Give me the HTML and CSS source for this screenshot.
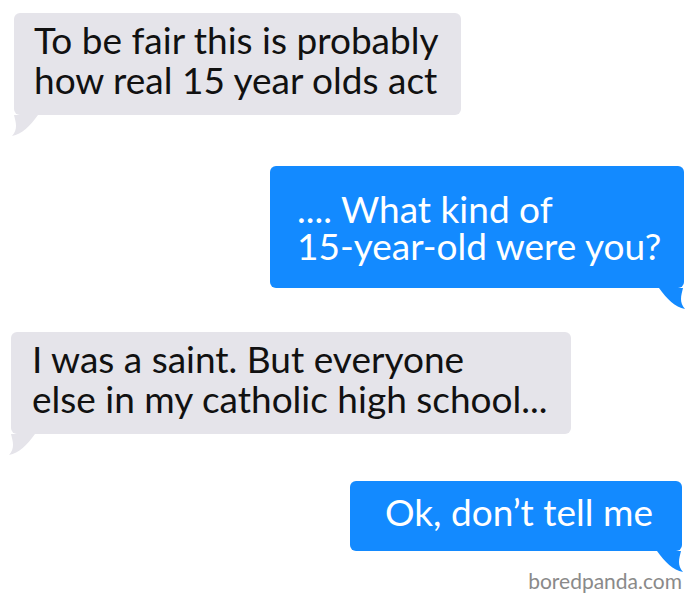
FILE: index.html
```html
<!DOCTYPE html>
<html lang="en">
<head>
    <meta charset="UTF-8">
    <meta name="viewport" content="width=device-width, initial-scale=1.0">
    <title>Text conversation</title>
    <link rel="stylesheet" href="styles.css">
</head>
<body>
    <div class="chat">
        <div class="bubble received first">
            To be fair this is probably<br>how real 15 year olds act
            <svg class="tail tail-left" width="30" height="22" viewBox="0 0 30 22"><path d="M2 0 C4 8 6 14 0 21 C10 19 18 11 26 0 Z"/></svg>
        </div>
        <div class="bubble sent second">
            .... What kind of<br>15-year-old were you?
            <svg class="tail tail-right" width="30" height="22" viewBox="0 0 30 22"><path d="M28 0 C26 8 24 14 30 21 C20 19 12 11 4 0 Z"/></svg>
        </div>
        <div class="bubble received third">
            I was a saint. But everyone<br>else in my catholic high school...
            <svg class="tail tail-left" width="30" height="22" viewBox="0 0 30 22"><path d="M2 0 C4 8 6 14 0 21 C10 19 18 11 26 0 Z"/></svg>
        </div>
        <div class="bubble sent fourth">
            Ok, don’t tell me
            <svg class="tail tail-right" width="30" height="22" viewBox="0 0 30 22"><path d="M28 0 C26 8 24 14 30 21 C20 19 12 11 4 0 Z"/></svg>
        </div>
        <div class="credit">boredpanda.com</div>
    </div>
</body>
</html>
```

FILE: styles.css
```css
body {
    margin: 0;
    background: #fff;
    font-family: Lato, "Open Sans", sans-serif;
}
.chat {
    display: flex;
    flex-direction: column;
    padding: 13px 16px 0 14px;
}
.bubble {
    position: relative;
    box-sizing: border-box;
    border-radius: 6px;
    font-size: 37px;
    line-height: 40px;
    white-space: nowrap;
}
.received {
    align-self: flex-start;
    background: #e5e4ea;
    color: #111;
}
.sent {
    align-self: flex-end;
    background: #138aff;
    color: #fff;
}
.first {
    width: 447px;
    height: 102px;
    padding: 7px 20px;
}
.second {
    width: 414px;
    height: 122px;
    margin-top: 51px;
    padding: 24px 27px;
    line-height: 37px;
}
.third {
    width: 560px;
    height: 102px;
    margin-top: 44px;
    margin-left: -3px;
    padding: 7px 21px;
}
.fourth {
    width: 332px;
    height: 70px;
    margin-top: 47px;
    margin-right: 2px;
    padding: 11px 35px;
}
.tail {
    position: absolute;
    top: 100%;
}
.tail-left {
    left: -2px;
}
.tail-right {
    right: -1px;
}
.received .tail {
    fill: #e5e4ea;
}
.sent .tail {
    fill: #138aff;
}
.credit {
    align-self: flex-end;
    margin-top: 17px;
    margin-right: 2px;
    color: #8a8a8a;
    font-size: 21px;
    line-height: 25px;
}
```
